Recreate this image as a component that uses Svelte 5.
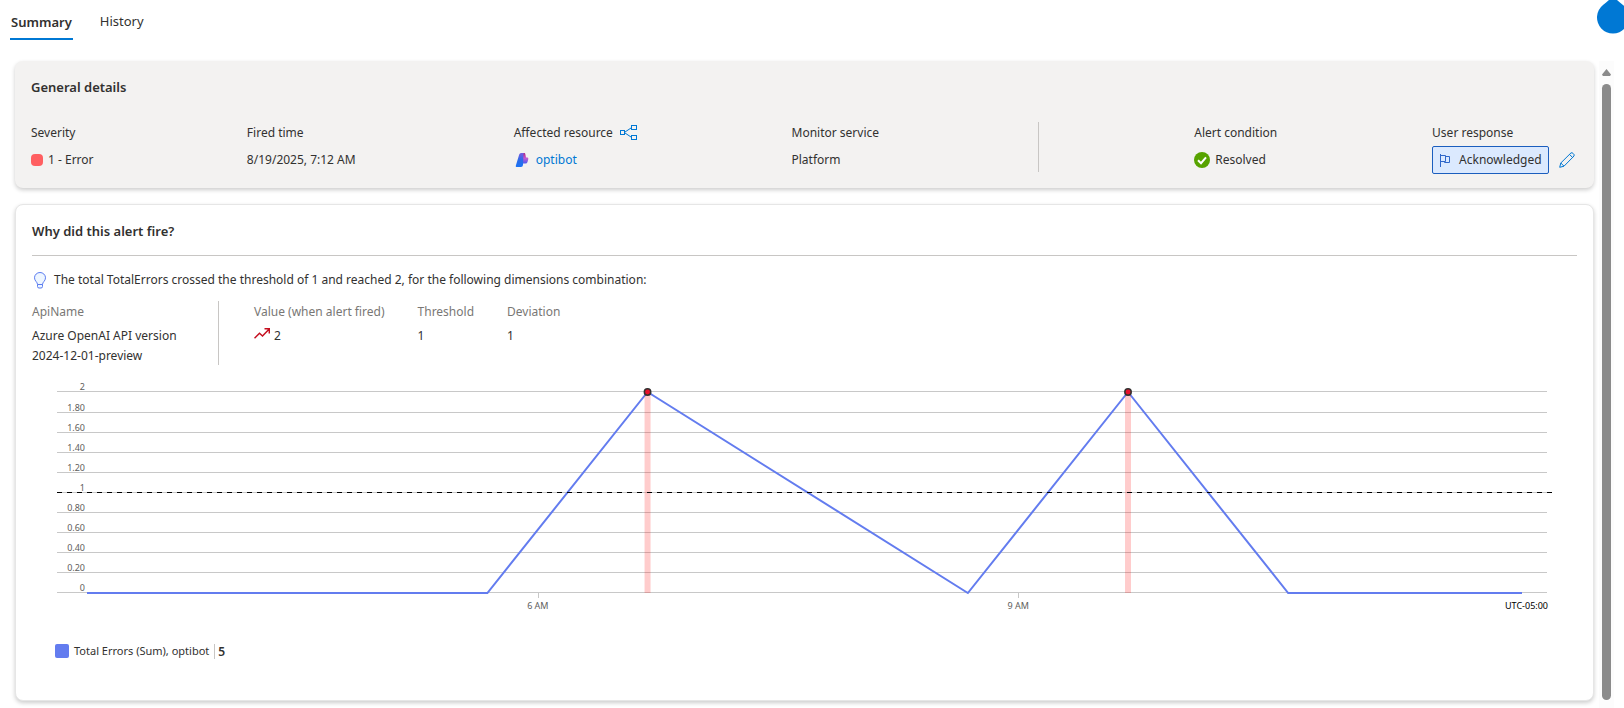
<script>
  // chart is drawn in real pixels, the width follows the card
  let chartWidth = $state(1516);

  const top = 13;
  const bottom = 214;
  const maxValue = 2;

  const ticks = [
    { value: 2, label: '2' },
    { value: 1.8, label: '1.80' },
    { value: 1.6, label: '1.60' },
    { value: 1.4, label: '1.40' },
    { value: 1.2, label: '1.20' },
    { value: 1, label: '1' },
    { value: 0.8, label: '0.80' },
    { value: 0.6, label: '0.60' },
    { value: 0.4, label: '0.40' },
    { value: 0.2, label: '0.20' },
    { value: 0, label: '0' },
  ];

  // hours since the start of the time range
  const points = [
    { hour: 0, value: 0 },
    { hour: 2.5, value: 0 },
    { hour: 3.5, value: 2 },
    { hour: 5.5, value: 0 },
    { hour: 6.5, value: 2 },
    { hour: 7.5, value: 0 },
    { hour: 8.96, value: 0 },
  ];
  const hours = [
    { hour: 2.815, label: '6 AM' },
    { hour: 5.815, label: '9 AM' },
  ];
  const fired = points.filter((p) => p.value > 1);

  let gridEnd = $derived(chartWidth - 22);
  let x = $derived((hour) => 34 + (hour * (gridEnd - 59)) / 8.96);
  const y = (value) => Math.ceil(bottom - (value / maxValue) * (bottom - top)) + 0.5;
  let line = $derived(points.map((p) => `${x(p.hour)},${y(p.value) + 0.5}`).join(' '));
</script>

<div class="page">
  <nav class="tabs">
    <a href="#summary" class="tab active">Summary</a>
    <a href="#history" class="tab">History</a>
  </nav>

  <svg class="drop" viewBox="0 0 32 34" aria-hidden="true">
    <path d="M16 -6C14 -1 10 2 6 5A16 16 0 1 0 26 5C22 2 18 -1 16 -6Z" fill="#0078d4" />
  </svg>

  <div class="body">
    <main>
      <section class="card details">
        <h2>General details</h2>
        <div class="fields">
          <div class="field">
            <div class="name">Severity</div>
            <div class="value"><span class="severity"></span>1 - Error</div>
          </div>
          <div class="field">
            <div class="name">Fired time</div>
            <div class="value">8/19/2025, 7:12 AM</div>
          </div>
          <div class="field">
            <div class="name">
              Affected resource
              <svg class="share" width="17" height="16" viewBox="0 0 17 16" fill="none" stroke="#0078d4">
                <rect x="0.5" y="5.5" width="4" height="4" />
                <rect x="11.5" y="0.5" width="5" height="4" />
                <rect x="11.5" y="10.5" width="5" height="4" />
                <path d="M5 7L11 3M5 8L11 12" />
              </svg>
            </div>
            <div class="value">
              <svg class="resource" width="14" height="14" viewBox="0 0 14 14">
                <defs>
                  <linearGradient id="blue" x1="0" y1="0" x2="0" y2="1">
                    <stop offset="0" stop-color="#7a5be0" />
                    <stop offset="0.5" stop-color="#2b6be8" />
                    <stop offset="1" stop-color="#1a73f5" />
                  </linearGradient>
                  <linearGradient id="pink" x1="0" y1="0" x2="0" y2="1">
                    <stop offset="0" stop-color="#b0237e" />
                    <stop offset="0.5" stop-color="#c65ad0" />
                    <stop offset="1" stop-color="#4a5cf0" />
                  </linearGradient>
                </defs>
                <path d="M8 0H9.500Q10 0 10.300 1L11 4.500H12.500Q13.500 4.500 13.300 6L12.500 9Q12 10.500 10.500 10.500H7Z" fill="url(#pink)" />
                <path d="M6 0H9Q8.500 .5 8.400 2L8 12Q7.800 14 6 14H1.500Q.5 14 .8 12.800L4.200 1.500Q4.700 0 6 0Z" fill="url(#blue)" />
              </svg>
              <a href="#optibot">optibot</a>
            </div>
          </div>
          <div class="field">
            <div class="name">Monitor service</div>
            <div class="value">Platform</div>
          </div>
          <div class="separator"></div>
          <div class="field">
            <div class="name">Alert condition</div>
            <div class="value">
              <svg class="check" width="16" height="16" viewBox="0 0 16 16">
                <circle cx="8" cy="8" r="8" fill="#57a300" />
                <path d="M4 8.300L7 11.200L12 5.300" fill="none" stroke="#fff" stroke-width="2" />
              </svg>
              Resolved
            </div>
          </div>
          <div class="field">
            <div class="name">User response</div>
            <div class="response">
              <span class="badge">
                <svg width="12" height="13" viewBox="0 0 12 13" fill="none" stroke="#2f67c9">
                  <path d="M1.500 0V13M1.500 1.500H6.500V7.500H1.500M6.500 2.500H10.500V8.500H5.500V7.500" />
                </svg>
                Acknowledged
              </span>
              <button class="edit" aria-label="Edit user response">
                <svg width="16" height="16" viewBox="0 0 16 16" fill="none" stroke="#0078d4">
                  <path d="M.7 15.300L1.800 11L12 .9Q13 .3 14.200 1.500Q15.700 2.800 15 4L5 14.200ZM1.800 11L5 14.200M10.500 2.400L13.600 5.500" />
                </svg>
              </button>
            </div>
          </div>
        </div>
      </section>

      <section class="card why">
        <h2>Why did this alert fire?</h2>
        <hr />
        <p class="reason">
          <svg width="14" height="17" viewBox="0 0 14 17" fill="#eef6ff" stroke="#5b7cf0">
            <path d="M4.500 12.500C4.500 10 1.500 9 1.500 5.800A5.500 5.300 0 0 1 12.500 5.800C12.500 9 9.500 10 9.500 12.500ZM4.500 12.500V14.500Q4.500 16 6 16H8Q9.500 16 9.500 14.500V12.500" />
          </svg>
          The total TotalErrors crossed the threshold of 1 and reached 2, for the following dimensions combination:
        </p>

        <div class="metrics">
          <dl class="api">
            <dt>ApiName</dt>
            <dd>Azure OpenAI API version 2024-12-01-preview</dd>
          </dl>
          <dl>
            <dt>Value (when alert fired)</dt>
            <dd>
              <svg width="16" height="11" viewBox="0 0 16 11" fill="none" stroke="#c50f1f" stroke-width="1.500">
                <path d="M.5 10.300L5.500 5.300L8.500 8L15 1.300M10.500 .8H15.300V5.500" />
              </svg>
              2
            </dd>
          </dl>
          <dl>
            <dt>Threshold</dt>
            <dd>1</dd>
          </dl>
          <dl>
            <dt>Deviation</dt>
            <dd>1</dd>
          </dl>
        </div>

        <div class="chart" bind:clientWidth={chartWidth}>
          <svg width={chartWidth} height="236" role="img" aria-label="Total Errors">
            {#each ticks as tick}
              <line class="grid" x1="4" x2={gridEnd} y1={y(tick.value)} y2={y(tick.value)} />
              <text class="tick" x="32" y={y(tick.value) - 2} text-anchor="end">{tick.label}</text>
            {/each}
            {#each hours as h}
              <line class="grid" x1={Math.round(x(h.hour)) + 0.5} x2={Math.round(x(h.hour)) + 0.5} y1={bottom} y2={bottom + 6} />
              <text class="tick" x={x(h.hour)} y={bottom + 17} text-anchor="middle">{h.label}</text>
            {/each}
            <text class="zone" x={gridEnd + 1} y={bottom + 17} text-anchor="end">UTC-05:00</text>
            <polyline class="series" points={line} />
            {#each fired as p}
              <rect class="fired" x={x(p.hour) - 3} y={top} width="6" height={bottom - top + 1} />
            {/each}
            <line class="threshold" x1="4" x2={gridEnd + 5} y1={y(1)} y2={y(1)} />
            {#each fired as p}
              <circle class="dot" cx={x(p.hour)} cy={y(p.value) + 0.5} r="3.2" stroke-width="1.5" />
            {/each}
          </svg>
        </div>

        <div class="legend">
          <span class="swatch"></span>
          Total Errors (Sum), optibot
          <strong>5</strong>
        </div>
      </section>
    </main>

    <div class="scrollbar">
      <span class="arrow"></span>
      <span class="thumb"></span>
    </div>
  </div>
</div>

<style>
  :global(body) {
    background: #fff;
  }

  .page {
    position: relative;
    display: flex;
    flex-direction: column;
    min-height: 100vh;
    overflow: hidden;
    color: #323130;
    font-family: 'Segoe UI', 'Noto Sans', sans-serif;
    font-size: 12px;
    line-height: 20px;
  }

  a {
    color: #0078d4;
    text-decoration: none;
  }

  .tabs {
    display: flex;
    gap: 27px;
    height: 61px;
    padding-left: 10px;
    box-sizing: border-box;
  }

  .tab {
    height: 28px;
    padding-top: 11px;
    color: #323130;
    font-size: 13px;
  }

  .tab.active {
    height: 26px;
    padding: 12px 1px 0;
    border-bottom: 2px solid #0078d4;
    font-weight: 600;
  }

  .drop {
    position: absolute;
    top: 0;
    right: -5px;
    width: 32px;
    height: 34px;
  }

  .body {
    display: flex;
    flex: 1;
    padding-right: 10px;
  }

  main {
    flex: 1;
    min-width: 0;
    padding: 0 5px 9px 15px;
  }

  .card {
    box-sizing: border-box;
    border-radius: 8px;
    box-shadow: 0 2px 4px rgba(0, 0, 0, .2);
  }

  h2 {
    margin: 0;
    font-size: 13px;
    line-height: 20px;
    font-weight: 600;
  }

  .details {
    height: 127px;
    padding: 16px 16px 0;
    background: #f3f2f1;
  }

  .fields {
    display: grid;
    grid-template-columns: 216fr 267fr 278fr 247fr 156fr 238fr 146fr;
    margin-top: 25px;
    white-space: nowrap;
  }

  .field {
    min-width: 0;
    padding-top: 1px;
  }

  .name,
  .value {
    display: flex;
    align-items: center;
    height: 20px;
  }

  .value {
    margin-top: 7px;
  }

  .separator {
    height: 50px;
    border-left: 1px solid #c8c6c4;
  }

  .severity {
    width: 12px;
    height: 12px;
    margin-right: 5px;
    border-radius: 4px;
    background: #ff5f61;
  }

  .share {
    margin-left: 7px;
  }

  .resource {
    margin: 0 7px 0 1px;
  }

  .check {
    margin-right: 5px;
  }

  .response {
    display: flex;
    align-items: center;
    gap: 10px;
    margin-top: 3px;
  }

  .badge {
    display: flex;
    align-items: center;
    gap: 8px;
    box-sizing: border-box;
    height: 28px;
    padding: 0 6px;
    border: 1px solid #1b5ebe;
    border-radius: 2px;
    background: #dbe9fe;
  }

  .edit {
    display: flex;
    padding: 0;
    border: 0;
    background: none;
    cursor: pointer;
  }

  .why {
    margin-top: 16px;
    padding: 16px 16px 39px;
    border: 1px solid #e6e6e6;
    background: #fff;
  }

  hr {
    margin: 14px 0 0;
    border: 0;
    border-top: 1px solid #c8c6c4;
  }

  .reason {
    display: flex;
    align-items: center;
    gap: 7px;
    margin: 14px 0 0;
    padding-left: 1px;
  }

  .metrics {
    display: flex;
    gap: 33px;
    margin-top: 11px;
  }

  dl {
    margin: 0;
    padding-top: 1px;
  }

  .api {
    box-sizing: border-box;
    width: 187px;
    height: 64px;
    margin-right: 2px;
    padding-right: 36px;
    border-right: 1px solid #c8c6c4;
  }

  dt {
    color: #797775;
  }

  dd {
    display: flex;
    gap: 4px;
    margin: 4px 0 0;
  }

  dd svg {
    margin-top: 2px;
  }

  .chart {
    margin: 13px 8px 0 21px;
    overflow: hidden;
  }

  .chart svg {
    display: block;
  }

  .grid {
    stroke: #c8c8c8;
  }

  .tick {
    fill: #605e5c;
    font-size: 9px;
  }

  .zone {
    fill: #000;
    font-size: 9px;
  }

  .series {
    fill: none;
    stroke: #637cef;
    stroke-width: 2;
  }

  .fired {
    fill: #f00;
    fill-opacity: .2;
  }

  .threshold {
    stroke: #000;
    stroke-dasharray: 5 5;
  }

  .dot {
    fill: #e8112d;
    stroke: #323130;
  }

  .legend {
    display: flex;
    align-items: center;
    gap: 5px;
    margin-top: 27px;
    padding-left: 23px;
    font-size: 11px;
  }

  .swatch {
    width: 14px;
    height: 14px;
    border-radius: 2px;
    background: #637cef;
  }

  .legend strong {
    padding-left: 3px;
    border-left: 1px solid #c8c6c4;
    font-size: 12px;
    font-weight: 600;
    line-height: 15px;
  }

  .scrollbar {
    display: flex;
    flex-direction: column;
    align-items: center;
    width: 15px;
    background: #fcfcfc;
  }

  .arrow {
    width: 9px;
    height: 7px;
    margin: 8px 0;
    background: #8b8b8b;
    clip-path: polygon(50% 0, 100% 80%, 90% 100%, 10% 100%, 0 80%);
  }

  .thumb {
    flex: 1;
    width: 9px;
    margin-bottom: 10px;
    border-radius: 5px;
    background: #8b8b8b;
  }
</style>
